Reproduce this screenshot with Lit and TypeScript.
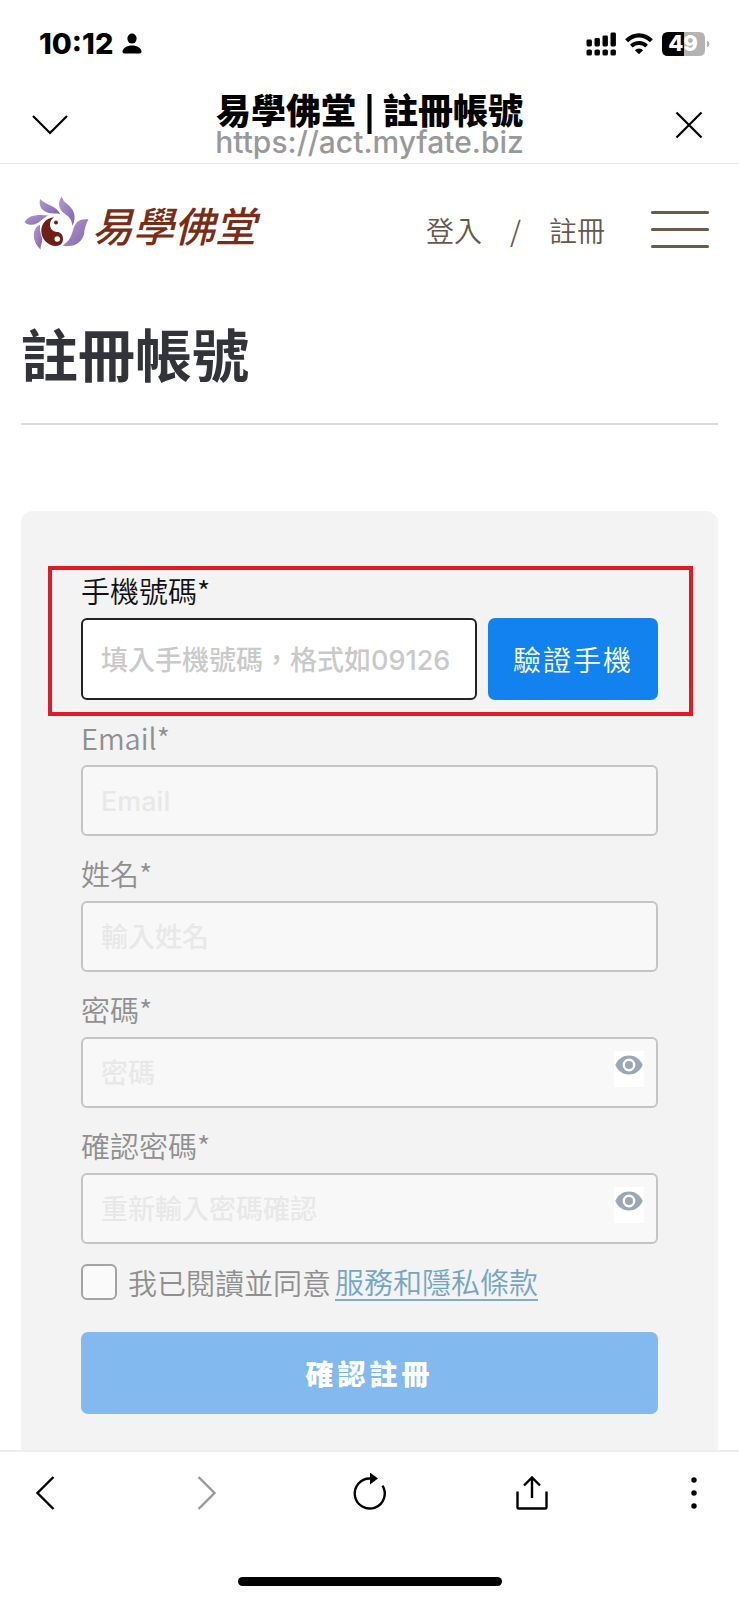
import { LitElement, html, css, nothing } from "lit";
import { customElement, state } from "lit/decorators.js";

interface Field {
  id: string;
  label: string;
  placeholder: string;
  type: "text" | "email" | "password";
}

const FIELDS: Field[] = [
  { id: "email", label: "Email*", placeholder: "Email", type: "email" },
  { id: "name", label: "姓名*", placeholder: "輸入姓名", type: "text" },
  { id: "password", label: "密碼*", placeholder: "密碼", type: "password" },
  { id: "confirm", label: "確認密碼*", placeholder: "重新輸入密碼確認", type: "password" },
];

@customElement("status-bar")
class StatusBar extends LitElement {
  static styles = css`
    :host {
      display: flex;
      align-items: center;
      justify-content: space-between;
      height: 88px;
      padding: 0 29px 0 39px;
      font-family: Inter, "Liberation Sans", sans-serif;
    }
    .side {
      display: flex;
      align-items: center;
      gap: 9px;
    }
    .time {
      font-size: 29px;
      line-height: 32px;
      font-weight: 800;
    }
    svg {
      display: block;
    }
  `;

  render() {
    return html`
      <div class="side">
        <span class="time">10:12</span>
        <svg width="20" height="22" viewBox="0 0 20 22" aria-hidden="true">
          <ellipse cx="10" cy="5.6" rx="4.6" ry="5" />
          <path d="M0.5 18.8C0.5 15 5 12.4 10 12.4S19.5 15 19.5 18.8Q19.5 20.6 17.7 20.6H2.3Q0.5 20.6 0.5 18.8Z" />
        </svg>
      </div>
      <div class="side">
        <svg width="30" height="24" viewBox="0 0 30 24" aria-hidden="true">
          <rect x="0.5" y="7.5" width="5.4" height="7" rx="1.4" />
          <rect x="8.5" y="6" width="5.4" height="8.5" rx="1.4" />
          <rect x="16.5" y="3.5" width="5.4" height="11" rx="1.4" />
          <rect x="24.5" y="0.5" width="5.4" height="14" rx="1.4" />
          <rect x="0.5" y="17.5" width="5.4" height="6" rx="1.6" />
          <rect x="8.5" y="17.5" width="5.4" height="6" rx="1.6" />
          <rect x="16.5" y="17.5" width="5.4" height="6" rx="1.6" />
          <rect x="24.5" y="17.5" width="5.4" height="6" rx="1.6" />
        </svg>
        <svg width="28" height="22" viewBox="0 0 28 22" aria-hidden="true">
          <path d="M1.6 7.8Q7 2.4 14 2.4T26.4 7.8" fill="none" stroke="#000" stroke-width="4.2" />
          <path d="M6.4 13.1Q9.6 10.1 14 10.1T21.6 13.1" fill="none" stroke="#000" stroke-width="4" />
          <path d="M14 21.2L9.9 17.2Q11.6 15.6 14 15.6T18.1 17.2Z" />
        </svg>
        <svg width="48" height="24" viewBox="0 0 48 24" role="img" aria-label="49%">
          <path d="M6 0H22V24H6Q0 24 0 18V6Q0 0 6 0Z" />
          <path d="M22 0H37Q43 0 43 6V18Q43 24 37 24H22Z" fill="#b3b3b3" />
          <path d="M45 8.5Q47.5 9.5 47.5 12T45 15.5Z" fill="#b3b3b3" />
          <text x="21" y="19" text-anchor="middle" fill="#fff" font-size="22" font-weight="800">49</text>
        </svg>
      </div>
    `;
  }
}

@customElement("browser-header")
class BrowserHeader extends LitElement {
  static styles = css`
    :host {
      display: grid;
      grid-template-columns: 44px 1fr 44px;
      align-items: center;
      padding: 4px 28px 5px;
      border-bottom: 1px solid #e6e6e6;
    }
    .titles {
      display: flex;
      flex-direction: column;
      align-items: center;
      min-width: 0;
    }
    .title {
      font-family: "Noto Sans CJK TC", sans-serif;
      font-size: 35px;
      line-height: 34px;
      font-weight: 900;
      color: #000;
      white-space: nowrap;
    }
    .url {
      font-family: Inter, "Liberation Sans", sans-serif;
      font-size: 30px;
      line-height: 32px;
      font-weight: 500;
      color: #999;
    }
    button {
      display: grid;
      place-items: center;
      width: 44px;
      height: 44px;
      padding: 0;
      border: 0;
      background: none;
    }
  `;

  render() {
    return html`
      <button type="button" aria-label="收合">
        <svg width="36" height="20" viewBox="0 0 36 20"><path d="M1 1L18 18L35 1" fill="none" stroke="#000" stroke-width="2.2" /></svg>
      </button>
      <div class="titles">
        <span class="title">易學佛堂 | 註冊帳號</span>
        <span class="url">https://act.myfate.biz</span>
      </div>
      <button type="button" aria-label="關閉">
        <svg width="28" height="28" viewBox="0 0 28 28"><path d="M1.5 1.5L26.5 26.5M26.5 1.5L1.5 26.5" fill="none" stroke="#000" stroke-width="2.2" /></svg>
      </button>
    `;
  }
}

@customElement("site-header")
class SiteHeader extends LitElement {
  static styles = css`
    :host {
      display: flex;
      align-items: center;
      justify-content: space-between;
      height: 130px;
      padding: 0 30px 0 24px;
      font-family: "Noto Sans CJK TC", sans-serif;
    }
    a {
      color: inherit;
      text-decoration: none;
    }
    .logo {
      display: flex;
      align-items: center;
      gap: 2px;
      padding-bottom: 11px;
      color: #7b2c14;
    }
    .brand {
      font-size: 41px;
      line-height: 56px;
      font-weight: 500;
      font-style: italic;
    }
    .nav {
      display: flex;
      align-items: center;
      gap: 28px;
      padding-top: 2px;
      font-size: 28px;
      line-height: 36px;
      font-weight: 350;
      color: #66584a;
    }
    .menu {
      display: grid;
      gap: 14px;
      width: 58px;
      margin-left: 18px;
      padding: 0 0 2px;
      border: 0;
      background: none;
    }
    .line {
      height: 3px;
      border-radius: 2px;
      background: #6b5b4b;
    }
  `;

  render() {
    return html`
      <a class="logo" href="#">
        <svg width="66" height="56" viewBox="0 0 66 56" aria-hidden="true">
          <defs>
            <linearGradient id="petal" x1="0" y1="0" x2="1" y2="1">
              <stop offset="0" stop-color="#b49bd2" />
              <stop offset="1" stop-color="#8263ae" />
            </linearGradient>
          </defs>
          <g fill="url(#petal)">
            <path d="M0.5 26C5 19 13 18 24.5 19.5C17 22 15 30 5 28.5Q2 28 0.5 26Z" />
            <path d="M16 3C14 12 20 18 31.500 17.500Q34 17 36.500 18.500C32 9 23 10 16 3Z" />
            <path d="M37.500 0.500C33 7 35 14 41 18C46 21 48 25 48.500 30C53 20 50 13 43 8Q39 5 37.500 0.500Z" />
            <path d="M64.500 23.500C55 22 51 27 49 34C47 42 44 46 38.500 49.500C51 52 58 46 60 38Q61 29 64.500 23.500Z" />
            <path d="M12.500 31C8 36 9 47 16.500 53.500C16.500 48 20 45 17 39Q15.500 35 16 28.500Z" />
          </g>
          <path d="M30 21.300C22 22 17.300 28 17.300 35C17.300 43 24 50 32 50C36.500 50 39 47 39 43C39 38 36 36 33 36C28 35.500 26 32 26 28.500C26 25 28 22.500 30 21.300Z" fill="#6f2016" />
          <circle cx="33.300" cy="43" r="2.800" fill="#fff" />
          <circle cx="32" cy="26.500" r="2" fill="#6f2016" />
        </svg>
        <span class="brand">易學佛堂</span>
      </a>
      <nav class="nav">
        <a href="#login">登入</a>
        <span>/</span>
        <a href="#register">註冊</a>
        <button class="menu" type="button" aria-label="選單">
          <span class="line"></span>
          <span class="line"></span>
          <span class="line"></span>
        </button>
      </nav>
    `;
  }
}

@customElement("register-form")
class RegisterForm extends LitElement {
  static styles = css`
    :host {
      display: block;
      box-sizing: border-box;
      padding: 55px 25px 34px 27px;
      border-radius: 12px 12px 0 0;
      background: #f3f3f3;
      font-family: "Noto Sans CJK TC", sans-serif;
      font-size: 29px;
      line-height: 36px;
      font-weight: 350;
    }
    * {
      box-sizing: border-box;
    }
    .highlight {
      padding: 2px 31px 12px 29px;
      border: 4px solid #e01b24;
      color: #111;
    }
    .locked {
      padding: 3px 35px 0 33px;
      color: #8f8f8f;
    }
    .field {
      display: grid;
      gap: 10px;
      margin-bottom: 19px;
    }
    .phone {
      display: grid;
      gap: 10px;
    }
    .row {
      display: flex;
      gap: 11px;
    }
    .control {
      position: relative;
      display: grid;
    }
    .input {
      width: 100%;
      min-width: 0;
      height: 71px;
      margin: 0;
      padding: 2px 18px 0;
      border: 2px solid #c4c4c4;
      border-radius: 6px;
      background: #f8f8f8;
      font-family: Inter, "Noto Sans CJK TC", sans-serif;
      font-size: 27px;
      font-weight: 500;
      color: #8c8c8c;
      outline: none;
    }
    .input::placeholder {
      color: #e8e8e8;
      opacity: 1;
    }
    .input.active {
      flex: 1;
      height: 82px;
      padding-right: 26px;
      border-color: #222;
      background: #fff;
      color: #111;
    }
    .input.active::placeholder {
      color: #c9c9c9;
    }
    .verify,
    .submit {
      height: 82px;
      padding: 0;
      border: 0;
      border-radius: 7px;
      font-family: inherit;
      font-size: 28px;
      color: #fff;
    }
    .verify {
      flex: 0 0 170px;
      background: #1283ee;
      font-weight: 350;
      letter-spacing: 2px;
    }
    .submit {
      display: block;
      width: 100%;
      margin-top: 31px;
      background: #82b9ef;
      font-weight: 900;
      letter-spacing: 4px;
    }
    .eye {
      position: absolute;
      top: 14px;
      right: 14px;
      display: grid;
      justify-items: center;
      width: 30px;
      height: 36px;
      padding: 4px 0 0;
      border: 0;
      background: #fff;
    }
    .terms {
      display: flex;
      align-items: center;
    }
    .check {
      appearance: none;
      flex: none;
      width: 36px;
      height: 36px;
      margin: 0 11px 0 0;
      border: 2px solid #a3a3a3;
      border-radius: 6px;
      background: #fafafa;
    }
    .check:checked {
      background: #82b9ef;
    }
    .link {
      margin-left: 4px;
      border-bottom: 2px solid #83adc4;
      color: #73a5c4;
      text-decoration: none;
    }
  `;

  @state() private revealed: Record<string, boolean> = {};

  private toggle(id: string) {
    this.revealed = { ...this.revealed, [id]: !this.revealed[id] };
  }

  private renderField(f: Field) {
    const secret = f.type === "password";
    return html`
      <div class="field">
        <label for=${f.id}>${f.label}</label>
        <div class="control">
          <input
            class="input"
            id=${f.id}
            type=${secret && this.revealed[f.id] ? "text" : f.type}
            placeholder=${f.placeholder}
          />
          ${secret
            ? html`<button class="eye" type="button" aria-label="顯示密碼" @click=${() => this.toggle(f.id)}>
                <svg width="28" height="20" viewBox="0 0 28 20">
                  <path d="M0.3 10C3 3.8 8 0.5 14 0.5S25 3.8 27.7 10C25 16.2 20 19.5 14 19.5S3 16.2 0.3 10Z" fill="#9aa8b5" />
                  <circle cx="14" cy="10" r="5.2" fill="#9aa8b5" stroke="#fff" stroke-width="2.4" />
                </svg>
              </button>`
            : nothing}
        </div>
      </div>
    `;
  }

  render() {
    return html`
      <form @submit=${(e: Event) => e.preventDefault()}>
        <div class="highlight">
          <div class="phone">
            <label for="phone">手機號碼*</label>
            <div class="row">
              <input class="input active" id="phone" type="tel" placeholder="填入手機號碼，格式如0912678678" />
              <button class="verify" type="button">驗證手機</button>
            </div>
          </div>
        </div>
        <div class="locked">
          ${FIELDS.map((f) => this.renderField(f))}
          <div class="terms">
            <input class="check" id="agree" type="checkbox" />
            <label for="agree">我已閱讀並同意</label>
            <a class="link" href="#terms">服務和隱私條款</a>
          </div>
          <button class="submit" type="submit">確認註冊</button>
        </div>
      </form>
    `;
  }
}

@customElement("browser-toolbar")
class BrowserToolbar extends LitElement {
  static styles = css`
    :host {
      position: sticky;
      bottom: 0;
      display: block;
      border-top: 2px solid #ededed;
      background: #fff;
    }
    .actions {
      display: flex;
      justify-content: space-between;
      padding: 19px 23px 0;
    }
    button {
      display: grid;
      place-items: center;
      width: 44px;
      height: 44px;
      padding: 0;
      border: 0;
      background: none;
    }
    svg {
      fill: none;
      stroke: #000;
      stroke-width: 2.4;
    }
    .muted {
      stroke: #999;
    }
    .solid {
      fill: #000;
      stroke: none;
    }
    .home {
      width: 264px;
      height: 9px;
      margin: 62px auto 14px;
      border-radius: 5px;
      background: #000;
    }
  `;

  render() {
    return html`
      <div class="actions">
        <button type="button" aria-label="上一頁">
          <svg width="20" height="34" viewBox="0 0 20 34"><path d="M18.5 1L2.5 17L18.5 33" /></svg>
        </button>
        <button type="button" aria-label="下一頁">
          <svg class="muted" width="20" height="34" viewBox="0 0 20 34"><path d="M1.5 1L17.5 17L1.5 33" /></svg>
        </button>
        <button type="button" aria-label="重新整理">
          <svg width="36" height="40" viewBox="0 0 36 40">
            <path d="M30.5 12.6A15 15 0 1 1 18 5.5" />
            <path class="solid" d="M18 -0.5L26 5.5L18 11.500Z" />
          </svg>
        </button>
        <button type="button" aria-label="分享">
          <svg width="32" height="36" viewBox="0 0 32 36">
            <path d="M1.5 16.5V32.5Q1.5 33.5 2.5 33.5H29.5Q30.5 33.5 30.5 32.5V16.5M16 23V3M8 10.5L16 2.5L24 10.5" />
          </svg>
        </button>
        <button type="button" aria-label="更多">
          <svg class="solid" width="6" height="34" viewBox="0 0 6 34">
            <circle cx="3" cy="4" r="2.7" /><circle cx="3" cy="17" r="2.7" /><circle cx="3" cy="30" r="2.7" />
          </svg>
        </button>
      </div>
      <div class="home"></div>
    `;
  }
}

@customElement("app-root")
class AppRoot extends LitElement {
  static styles = css`
    :host {
      display: flex;
      flex-direction: column;
      min-height: 100vh;
      background: #fff;
      color: #000;
    }
    .page {
      flex: 1;
      display: flex;
      flex-direction: column;
      padding: 0 21px;
    }
    .heading {
      margin: 28px 0 86px;
      padding-bottom: 41px;
      border-bottom: 2px solid #dadcdc;
      font-family: "Noto Sans CJK TC", sans-serif;
      font-size: 57px;
      line-height: 60px;
      font-weight: 700;
      color: #333439;
    }
    .card {
      flex: 1;
    }
  `;

  render() {
    return html`
      <status-bar></status-bar>
      <browser-header></browser-header>
      <site-header></site-header>
      <main class="page">
        <h1 class="heading">註冊帳號</h1>
        <register-form class="card"></register-form>
      </main>
      <browser-toolbar></browser-toolbar>
    `;
  }
}
